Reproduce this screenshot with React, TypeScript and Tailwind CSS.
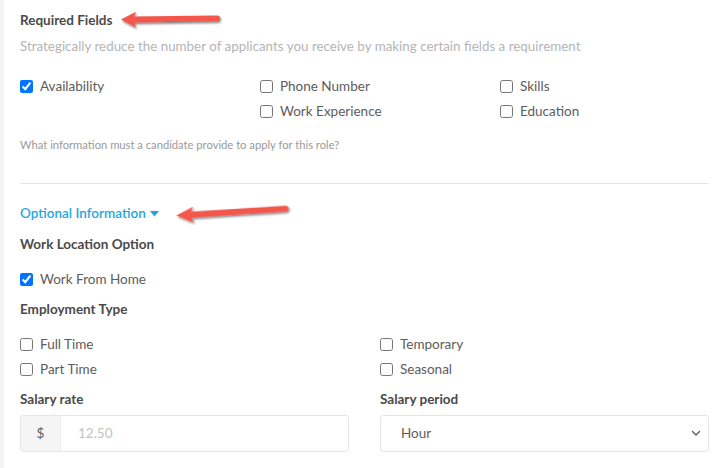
import type { ReactNode } from "react";

function Arrow({ className }: { className: string }) {
  return (
    <svg className={className} viewBox="0 0 104 20" fill="none" preserveAspectRatio="none">
      <defs>
        <filter id="arrowShadow" x="-10%" y="-40%" width="120%" height="180%">
          <feDropShadow dx="1" dy="1.5" stdDeviation="0.8" floodColor="#000" floodOpacity="0.55" />
        </filter>
      </defs>
      <g filter="url(#arrowShadow)">
        <path d="M2 10 L17 2.5 L15 7.2 L98 6.2 Q101 6.2 101 8.8 Q101 11.4 98 11.6 L15 12.8 L17 17.5 Z" fill="#f4574b" />
      </g>
    </svg>
  );
}

function Check({ label, checked = false }: { label: string; checked?: boolean }) {
  return (
    <label className="flex h-[25px] items-center gap-[7px] text-[13.5px] text-[#5c5c5c]">
      <input
        type="checkbox"
        defaultChecked={checked}
        className="m-0 h-[13px] w-[13px] accent-[#0075ff]"
      />
      <span>{label}</span>
    </label>
  );
}

function Heading({ children }: { children: ReactNode }) {
  return <div className="text-[13.5px] font-bold text-[#4a4a4a]">{children}</div>;
}

export default function App() {
  return (
    <div
      className="flex h-[468px] w-[726px] overflow-hidden bg-white"
      style={{ fontFamily: "Lato, 'Open Sans', sans-serif" }}
    >
      <div className="w-[4px] shrink-0 bg-[#f2f3f5]" />
      <div className="w-[705px] pl-[16px] pt-[10px]">
        <div className="relative h-[20px] leading-[20px]">
          <Heading>Required Fields</Heading>
          <Arrow className="absolute left-[99px] top-[-1px] h-[21px] w-[104px]" />
        </div>
        <p className="mt-[6px] text-[13.4px] leading-[20px] text-[#b5b5b5]">
          Strategically reduce the number of applicants you receive by making certain fields a requirement
        </p>

        <div className="mt-[18px] grid grid-cols-[240px_240px_1fr]">
          <div className="flex flex-col">
            <Check label="Availability" checked />
          </div>
          <div className="flex flex-col">
            <Check label="Phone Number" />
            <Check label="Work Experience" />
          </div>
          <div className="flex flex-col">
            <Check label="Skills" />
            <Check label="Education" />
          </div>
        </div>

        <p className="mt-[13px] text-[11.2px] leading-[16px] text-[#9a9a9a]">
          What information must a candidate provide to apply for this role?
        </p>

        <div className="mt-[30px] h-px bg-[#e6e6e6]" />

        <div className="relative mt-[19px] flex h-[20px] items-center gap-[4px] text-[13.5px] font-semibold text-[#1ea7dd]">
          <span>Optional Information</span>
          <svg width="9" height="6" viewBox="0 0 9 6" className="mt-[1px]">
            <path d="M0 0 H9 L4.5 5.5 Z" fill="#1ea7dd" />
          </svg>
          <Arrow className="absolute left-[154px] top-[-1px] h-[21px] w-[118px] rotate-[-3deg]" />
        </div>

        <div className="mt-[11px] leading-[20px]">
          <Heading>Work Location Option</Heading>
        </div>
        <div className="mt-[13px]">
          <Check label="Work From Home" checked />
        </div>

        <div className="mt-[7px] leading-[20px]">
          <Heading>Employment Type</Heading>
        </div>

        <div className="mt-[13px] grid grid-cols-[360px_1fr]">
          <div className="flex flex-col">
            <Check label="Full Time" />
            <Check label="Part Time" />
          </div>
          <div className="flex flex-col">
            <Check label="Temporary" />
            <Check label="Seasonal" />
          </div>
        </div>

        <div className="mt-[7px] grid grid-cols-[360px_1fr]">
          <div className="flex flex-col">
            <div className="leading-[20px]">
              <Heading>Salary rate</Heading>
            </div>
            <div className="mt-[6px] flex h-[37px] w-[329px] overflow-hidden rounded-[3px] border border-[#e6e6e6]">
              <div className="flex w-[40px] items-center justify-center border-r border-[#ededed] bg-[#f5f5f5] text-[13.5px] text-[#5c5c5c]">
                $
              </div>
              <input
                placeholder="12.50"
                className="min-w-0 flex-1 bg-white pl-[17px] text-[13.5px] text-[#5c5c5c] outline-none placeholder:text-[#c4c4c4]"
              />
            </div>
          </div>
          <div className="flex flex-col">
            <div className="leading-[20px]">
              <Heading>Salary period</Heading>
            </div>
            <div className="relative mt-[6px] h-[37px] w-[329px]">
              <select
                defaultValue="Hour"
                className="h-full w-full appearance-none rounded-[3px] border border-[#e6e6e6] bg-white pl-[20px] text-[13.5px] text-[#5c5c5c] outline-none"
              >
                <option>Hour</option>
                <option>Day</option>
                <option>Week</option>
                <option>Month</option>
                <option>Year</option>
              </select>
              <svg
                className="pointer-events-none absolute right-[8px] top-[15px]"
                width="10"
                height="7"
                viewBox="0 0 10 7"
                fill="none"
              >
                <path d="M1.5 1.5 L5 5 L8.5 1.5" stroke="#666" strokeWidth="1.5" strokeLinecap="round" strokeLinejoin="round" />
              </svg>
            </div>
          </div>
        </div>
      </div>
    </div>
  );
}
